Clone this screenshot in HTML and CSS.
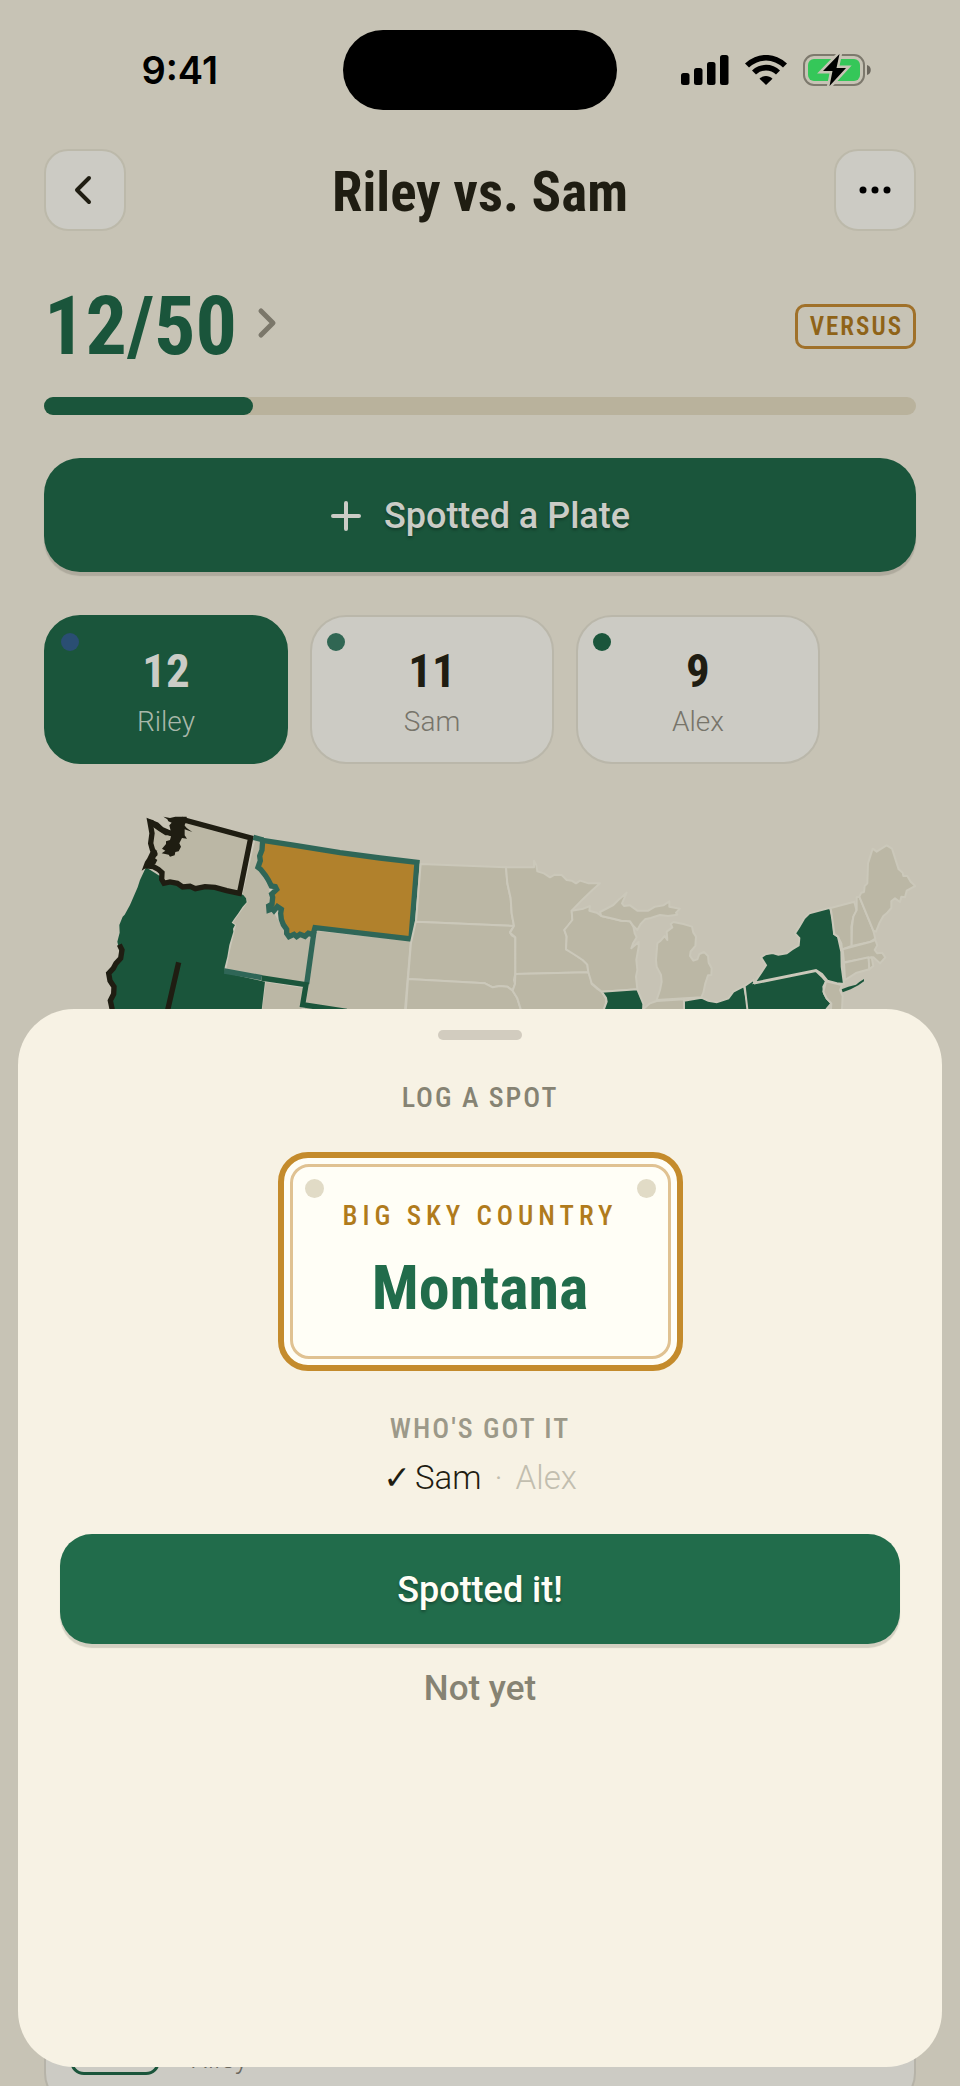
FILE: index.html
```html
<!DOCTYPE html>
<html lang="en">
<head>
  <meta charset="UTF-8" />
  <meta name="viewport" content="width=device-width, initial-scale=1.0" />
  <title>Riley vs. Sam</title>
  <link rel="stylesheet" href="styles.css">
</head>
<body>
  <div class="screen">
    <div class="status">
      <span class="time">9:41</span>
      <div class="island"></div>
      <div class="status-icons">
        <svg width="48" height="30" viewBox="0 0 48 30" aria-hidden="true">
          <rect x="0" y="18" width="8.500" height="12" rx="2.500"/>
          <rect x="13" y="13" width="8.500" height="17" rx="2.500"/>
          <rect x="26" y="7" width="8.500" height="23" rx="2.500"/>
          <rect x="39" y="0" width="8.500" height="30" rx="2.500"/>
        </svg>
        <svg width="42" height="30" viewBox="0 0 42 30" aria-hidden="true">
          <path d="M21 30l-6.500-6.300c3.600-3.600 9.400-3.600 13 0z"/>
          <path d="M7 15.500a20 20 0 0 1 28 0l-4 4a14.400 14.400 0 0 0-20 0z"/>
          <path d="M0 8.500a30 30 0 0 1 42 0l-4 4a24.400 24.400 0 0 0-34 0z"/>
        </svg>
        <svg width="68" height="34" viewBox="0 0 68 34" aria-hidden="true">
          <rect x="1" y="2" width="60" height="30" rx="10" fill="none" stroke="#7d796d" stroke-width="2"/>
          <rect x="5" y="6" width="52" height="22" rx="6" fill="#35c759"/>
          <path d="M64 12c5 1 5 9 0 10z" fill="#6b675d"/>
          <path d="M36.500 1L20 18h9.500L26.500 33 43 15h-9.500z" stroke="#c7c3b5" stroke-width="5"/>
          <path d="M36.500 1L20 18h9.500L26.500 33 43 15h-9.500z"/>
        </svg>
      </div>
    </div>

    <header class="topbar">
      <button class="icon-btn" aria-label="Back">
        <svg width="22" height="30" viewBox="0 0 22 30"><path d="M15 3L3 15l12 12" fill="none" stroke="#1f1d12" stroke-width="4" stroke-linecap="round" stroke-linejoin="round"/></svg>
      </button>
      <h1>Riley vs. Sam</h1>
      <button class="icon-btn" aria-label="More">
        <svg width="32" height="8" viewBox="0 0 32 8"><circle cx="4" cy="4" r="3.500"/><circle cx="16" cy="4" r="3.500"/><circle cx="28" cy="4" r="3.500"/></svg>
      </button>
    </header>

    <main>
      <div class="score">
        <button class="count">12/50
          <svg width="20" height="38" viewBox="0 0 20 38" aria-hidden="true"><path d="M4 4l12 12L4 28" fill="none" stroke="#7b776a" stroke-width="5" stroke-linecap="round" stroke-linejoin="round"/></svg>
        </button>
        <span class="badge">VERSUS</span>
      </div>
      <div class="progress"><div class="progress-fill" style="width: 24%"></div></div>

      <button class="primary">
        <svg width="32" height="32" viewBox="0 0 32 32" aria-hidden="true"><path d="M16 3v26M3 16h26" stroke="#cbccc6" stroke-width="4" stroke-linecap="round"/></svg>
        Spotted a Plate
      </button>

      <div class="players">
        <button class="player active"><i class="dot blue"></i><b>12</b><span>Riley</span></button>
        <button class="player"><i class="dot teal"></i><b>11</b><span>Sam</span></button>
        <button class="player"><i class="dot green"></i><b>9</b><span>Alex</span></button>
      </div>

      <svg class="map" viewBox="0 0 2616 1800" role="img" aria-label="Map of the United States">
        <!-- west -->
        <g transform="translate(138 -30)">
          <path class="state" d="M495 140L515 152 505 230 540 290 545 350 590 430 665 438 650 582 405 545 415 490 435 405 425 398 470 335 455 312z"/>
          <path class="state" d="M678 420L963 450 945 660 937 760 630 730 645 638z"/>
          <path class="state" d="M525 573L645 592 638 650 630 760 500 760z"/>
          <path class="claimed" d="M168 232L150 270 143 292 120 345 104 374 98 380 88 405 89 428 82 455 88 480 92 505 65 540 55 555 72 590 60 630 68 760 500 760 515 660 525 575 405 548 404 532 412 500 418 465 430 425 429 416 435 405 425 398 433 386 445 370 458 350 470 337 468 325 460 315 445 308 345 292 215 262z"/>
          <path class="state wa" d="M180 96L186 130 182 160 187 178 194 190 186 205 180 214 172 228 190 230 205 238 216 248 215 268 222 280 240 276 262 280 278 291 300 289 316 296 345 290 375 292 410 302 448 310 452 292 482 144 282 90 262 134 242 130 215 118 200 104z"/>
          <path class="ink" d="M170 88L190 90 192 98 215 115 242 122 238 106 245 98 235 94 232 88 220 80 240 84 256 80 290 80 290 90 282 104 290 114 307 126 284 118 284 136 291 146 276 144 268 160 273 170 266 184 256 186 254 196 240 200 236 194 215 190 226 182 216 176 228 162 228 154 240 150 244 136 226 136 205 122 190 112 184 102z"/>
          <path class="ink" d="M185 178L202 182 196 190 204 194 194 204 202 210 196 222 176 228 155 242 165 215 172 205z"/>
          <path class="line-ink" d="M88 464L96 480 92 505 78 520 70 535 56 550 60 572 72 590 71 612 61 632 66 655 72 760M266 517L210 760"/>
          <path class="line-teal" d="M490 142L520 150M672 425L650 582M403 543L515 563"/>
          <path class="line-green" d="M515 564L648 584 638 644 770 664"/>
          <path class="montana" d="M518 151L615 166 750 188 870 204 981 217 963 447 820 430 675 413 669 434 655 430 645 439 630 433 620 440 612 433 597 440 590 430 590 418 580 404 574 388 572 370 574 358 562 350 552 362 547 356 537 360 536 348 546 342 548 322 545 312 560 298 556 290 544 288 535 270 526 256 512 238 504 232 511 212 509 198 516 180z"/>
        </g>
        <!-- plains and great lakes -->
        <g transform="translate(1068 60)">
          <path class="state" d="M62 132L318 142 322 190 332 235 335 280 342 318 48 305z"/>
          <path class="state" d="M47 305L342 318 330 336 335 346 346 352 346 460 342 480 345 492 338 512 322 500 300 498 278 502 255 490 24 477 33 368z"/>
          <path class="state" d="M24 477L255 490 278 502 300 498 322 500 338 512 352 535 362 567 370 680 10 680z"/>
          <path class="state" d="M318 142L402 142 402 122 409 136 412 154 432 160 450 172 464 164 485 165 500 180 515 182 528 190 540 182 566 190 600 190 575 212 550 236 515 272 517 300 504 318 493 330 500 350 498 388 512 394 530 408 548 420 562 434 565 457 346 462 346 352 330 338 342 318 335 280 332 235 322 190z"/>
          <path class="state" d="M346 462L565 457 572 472 575 492 590 505 606 516 618 536 618 550 612 567 620 680 380 680 362 567 352 535 338 512 345 492z"/>
          <path class="state" d="M515 272L550 266 570 258 568 272 590 278 604 288 640 296 664 302 690 304 700 320 704 340 710 352 700 368 694 385 716 366 716 380 709 420 712 450 708 470 712 508 605 515 575 490 565 457 562 434 548 420 530 408 498 388 500 350 493 330 517 300z"/>
          <path class="claimed edged" d="M605 515L712 508 722 532 730 552 725 680 625 680 612 567 620 545 618 534z"/>
          <path class="state" d="M600 276L640 255 655 240 680 218 666 250 672 258 690 256 712 272 745 272 765 260 790 256 808 244 808 260 840 266 828 278 832 284 804 288 780 285 752 294 735 298 722 312 712 330 700 318 690 304 664 302 640 296 604 288z"/>
        </g>
        <!-- northeast -->
        <g transform="translate(1788 60)">
          <path class="state" d="M50 540L60 510 65 485 63 465 50 440 48 420 52 370 62 362 74 348 82 360 80 335 97 322 92 312 100 306 130 312 156 320 160 338 168 350 166 378 152 394 150 408 160 422 172 418 178 402 192 396 204 408 206 428 215 445 214 465 204 466 196 490 190 518 184 532z"/>
          <path class="state" d="M10 567L30 550 50 543 133 538 133 680 10 680z"/>
          <path class="claimed edged" d="M132 542L184 533 205 542 230 547 265 535 280 515 312 498 326 567 335 680 132 680z"/>
          <path class="claimed edged" d="M314 498L340 480 344 490 528 453 546 470 558 484 550 500 552 520 560 535 574 550 560 567 550 680 335 680z"/>
          <path class="claimed edged" d="M343 488L362 460 378 436 363 412 376 403 398 399 415 404 440 400 456 388 476 376 478 354 465 340 478 320 492 296 508 280 570 263 576 285 580 300 582 342 594 350 604 395 605 440 612 492 590 490 562 482 546 462 528 450z"/>
          <path class="claimed" d="M605 508L625 500 648 494 658 486 672 477 672 484 655 496 632 508 608 517z"/>
          <path class="state" d="M572 264L643 245 650 272 640 290 634 320 635 378 606 388 604 370 594 350 583 342z"/>
          <path class="state" d="M650 270L650 232 658 230 700 332 706 356 690 366 635 378 636 320 640 290z"/>
          <path class="state" d="M658 230L664 218 672 216 674 198 682 190 684 130 698 86 710 95 724 86 740 76 756 86 776 148 788 158 790 168 802 168 812 185 826 198 800 212 795 232 784 230 780 246 765 235 754 244 754 264 740 280 730 288 718 310 708 335 700 332z"/>
          <path class="state" d="M608 388L690 366 706 360 712 376 704 390 712 400 726 398 736 412 720 430 700 412 612 427z"/>
          <path class="state" d="M612 428L686 412 688 448 650 458 615 480z"/>
          <path class="state" d="M686 414L695 412 700 438 688 448z"/>
          <path class="state" d="M558 484L606 495 600 510 608 528 606 567 590 680 565 680 574 550 560 535 550 515z"/>
        </g>
      </svg>

      <section class="log-row">
        <div class="mini-plate"></div>
        <span>Riley</span>
      </section>
    </main>

    <section class="sheet" role="dialog" aria-label="Log a spot">
      <div class="handle"></div>
      <h2 class="eyebrow">LOG A SPOT</h2>
      <div class="plate">
        <div class="plate-inner">
          <div class="screws"><i></i><i></i></div>
          <p class="motto">BIG SKY COUNTRY</p>
          <p class="state-name">Montana</p>
        </div>
      </div>
      <h3 class="eyebrow light">WHO'S GOT IT</h3>
      <p class="who"><span class="check">✓</span>Sam <span class="sep">·</span> <span class="missing">Alex</span></p>
      <button class="primary confirm">Spotted it!</button>
      <button class="dismiss">Not yet</button>
    </section>
  </div>
</body>
</html>
```

FILE: styles.css
```css
* {
  box-sizing: border-box;
}
body {
  margin: 0;
  background: #c7c3b5;
  color: #1f1d12;
  font-family: Roboto, "Liberation Sans", sans-serif;
}
h1, h2, h3, p {
  margin: 0;
}
button {
  border: none;
  padding: 0;
  background: none;
  color: inherit;
  font-family: inherit;
  cursor: pointer;
}
svg {
  display: block;
}
.screen {
  position: relative;
  height: 100vh;
  overflow: hidden;
}

/* status bar */
.status {
  display: grid;
  grid-template-columns: 1fr 274px 1fr;
  align-items: center;
  padding-top: 30px;
}
.time {
  justify-self: end;
  padding-right: 125px;
  color: #000;
  font-family: Inter, sans-serif;
  font-size: 38px;
  font-weight: 600;
}
.island {
  height: 80px;
  border-radius: 40px;
  background: #000;
}
.status-icons {
  display: flex;
  align-items: center;
  gap: 16px;
  padding-left: 64px;
}

/* header */
.topbar {
  display: flex;
  align-items: center;
  justify-content: space-between;
  padding: 39px 44px 0;
}
.topbar h1 {
  padding-top: 4px;
  font-family: "Roboto Condensed", Roboto, sans-serif;
  font-size: 55px;
  font-weight: 700;
  line-height: 64px;
}
.icon-btn {
  display: flex;
  align-items: center;
  justify-content: center;
  width: 82px;
  height: 82px;
  border: 2px solid #bcb9aa;
  border-radius: 24px;
  background: #cccbc4;
}

main {
  padding: 0 44px;
}
.score {
  display: flex;
  align-items: center;
  justify-content: space-between;
  height: 110px;
  margin-top: 40px;
}
.count {
  display: flex;
  align-items: center;
  gap: 20px;
  color: #1a553b;
  font-family: "Roboto Condensed", Roboto, sans-serif;
  font-size: 82px;
  font-weight: 700;
  line-height: 110px;
}
.badge {
  padding: 0 10px 0 12px;
  border: 3px solid #a0712a;
  border-radius: 10px;
  color: #8f6318;
  font-family: "Roboto Condensed", Roboto, sans-serif;
  font-size: 25px;
  font-weight: 600;
  line-height: 39px;
  letter-spacing: 2px;
}
.progress {
  height: 18px;
  margin-top: 16px;
  border-radius: 9px;
  background: #b9b29c;
}
.progress-fill {
  height: 100%;
  border-radius: 9px;
  background: #1a553b;
}
.primary {
  display: flex;
  align-items: center;
  justify-content: center;
  gap: 22px;
  width: 100%;
  height: 114px;
  margin-top: 43px;
  padding-top: 2px;
  border-radius: 36px;
  background: #1a553b;
  box-shadow: 0 4px 1px #aeaa9d;
  color: #cbccc6;
  font-size: 36px;
  font-weight: 500;
  text-shadow: 0 2px 3px rgba(0, 0, 0, 0.3);
}
.players {
  display: grid;
  grid-template-columns: repeat(3, 244px);
  gap: 22px;
  margin-top: 43px;
}
.player {
  position: relative;
  display: flex;
  flex-direction: column;
  align-items: center;
  justify-content: center;
  height: 149px;
  padding-top: 10px;
  border: 2px solid #bab7aa;
  border-radius: 36px;
  background: #cccbc4;
}
.player b {
  font-family: "Roboto Condensed", Roboto, sans-serif;
  font-size: 47px;
  line-height: 54px;
}
.player span {
  color: #77746a;
  font-size: 28px;
  font-weight: 300;
  line-height: 48px;
}
.player.active {
  border-color: #1a553b;
  background: #1a553b;
  color: #cbccc6;
}
.player.active span {
  color: #a9b8aa;
}
.dot {
  position: absolute;
  top: 16px;
  left: 15px;
  width: 18px;
  height: 18px;
  border-radius: 50%;
}
.dot.blue {
  background: #2a4e73;
}
.dot.teal {
  background: #306653;
}
.dot.green {
  background: #1a553b;
}

/* map */
.map {
  width: 100%;
  margin-top: 36px;
}
.state {
  fill: #bbb7a5;
  stroke: #cbc8ba;
  stroke-width: 6;
  stroke-linejoin: round;
}
.claimed {
  fill: #1a553b;
}
.edged {
  stroke: #cbc8ba;
  stroke-width: 6;
}
.wa {
  stroke: #1f1d12;
  stroke-width: 16;
  stroke-linejoin: miter;
}
.ink {
  fill: #1f1d12;
}
.line-ink, .line-teal, .line-green {
  fill: none;
  stroke: #1f1d12;
  stroke-width: 16;
}
.line-teal {
  stroke: #2f6657;
}
.line-green {
  stroke: #1a553b;
}
.montana {
  fill: #b1812c;
  stroke: #2f6657;
  stroke-width: 16;
}

.log-row {
  display: flex;
  align-items: flex-end;
  gap: 30px;
  height: 180px;
  margin-top: 527px;
  padding: 0 24px 30px;
  border: 2px solid #b6b3a8;
  border-radius: 34px;
  background: #cccbc4;
  color: #6b685e;
  font-size: 28px;
  font-weight: 300;
}
.mini-plate {
  width: 90px;
  height: 60px;
  border: 3px solid #1a553b;
  border-radius: 14px;
}

/* bottom sheet */
.sheet {
  position: absolute;
  top: 1009px;
  right: 18px;
  bottom: 19px;
  left: 18px;
  display: flex;
  flex-direction: column;
  align-items: center;
  padding: 21px 42px;
  border-radius: 56px;
  background: #f7f2e4;
}
.handle {
  width: 84px;
  height: 10px;
  border-radius: 5px;
  background: #d2ccbf;
}
.eyebrow {
  margin-top: 40px;
  color: #868373;
  font-family: "Roboto Condensed", Roboto, sans-serif;
  font-size: 28px;
  font-weight: 500;
  line-height: 36px;
  letter-spacing: 2px;
}
.plate {
  width: 405px;
  height: 219px;
  margin-top: 36px;
  padding: 6px;
  border: 6px solid #c48b2c;
  border-radius: 30px;
  background: #fffef6;
}
.plate-inner {
  height: 100%;
  padding: 12px;
  border: 3px solid #e0c292;
  border-radius: 19px;
  text-align: center;
}
.screws {
  display: flex;
  justify-content: space-between;
}
.screws i {
  width: 19px;
  height: 19px;
  border-radius: 50%;
  background: #e1dbc6;
}
.motto {
  color: #b07b1c;
  font-family: "Roboto Condensed", Roboto, sans-serif;
  font-size: 27px;
  font-weight: 500;
  line-height: 36px;
  letter-spacing: 5px;
}
.state-name {
  color: #216c4b;
  font-family: "Roboto Condensed", Roboto, sans-serif;
  font-size: 62px;
  font-weight: 700;
  line-height: 108px;
}
.light {
  color: #9c9989;
}
.who {
  margin-top: 8px;
  font-size: 33px;
  font-weight: 300;
  line-height: 46px;
}
.check {
  margin-right: 4px;
  font-family: "DejaVu Sans", sans-serif;
  font-weight: 700;
  line-height: 1;
}
.sep {
  margin: 0 5px;
}
.sep, .missing {
  color: #c2beaf;
}
.confirm {
  flex-shrink: 0;
  height: 110px;
  margin-top: 33px;
  border-radius: 32px;
  background: #216c4b;
  box-shadow: 0 4px 1px #d3d0c1;
  color: #fffef6;
}
.dismiss {
  margin-top: 24px;
  color: #868373;
  font-size: 35px;
  font-weight: 500;
  line-height: 42px;
}
```
